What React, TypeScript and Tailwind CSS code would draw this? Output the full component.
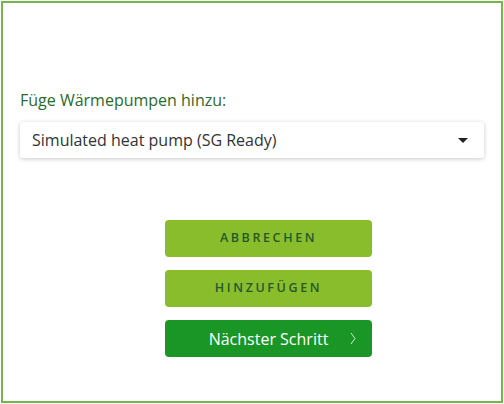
import React from 'react'

const font = { fontFamily: '"Open Sans", "Noto Sans", sans-serif' }

const AddHeatPump = () => {
    return (
        <div className="w-[504px] h-[404px] bg-white p-px" style={font}>
            <div className="flex h-full flex-col border-2 border-[#74b64a] px-[17px] pt-[87px]">
                <label htmlFor="heatpump" className="mb-[12px] text-[16px] leading-[20px] text-[#2c6a2e]">
                    Füge Wärmepumpen hinzu:
                </label>
                <div
                    id="heatpump"
                    className="flex h-[36px] items-center justify-between rounded-[3px] bg-white pl-[12px] pr-[16px] shadow-[0_1px_4px_rgba(0,0,0,0.22)]"
                >
                    <span className="text-[16px] text-[#333333]">Simulated heat pump (SG Ready)</span>
                    <svg width="10" height="5" viewBox="0 0 10 5">
                        <path d="M0 0h10L5 5z" fill="#222222" />
                    </svg>
                </div>
                <div className="mt-[62px] flex flex-col items-start gap-[13px] pl-[145px]">
                    <button className="h-[37px] w-[207px] rounded-[4px] bg-[#8abd2c] text-[12.5px] font-semibold tracking-[2.6px] text-[#24582a]">
                        ABBRECHEN
                    </button>
                    <button className="h-[37px] w-[207px] rounded-[4px] bg-[#8abd2c] text-[12.5px] font-semibold tracking-[2.6px] text-[#24582a]">
                        HINZUFÜGEN
                    </button>
                    <button className="relative h-[37px] w-[207px] rounded-[4px] bg-[#1a9626] text-[16px] text-white">
                        Nächster Schritt
                        <svg
                            className="absolute right-[16px] top-[12px]"
                            width="6"
                            height="13"
                            viewBox="0 0 6 13"
                        >
                            <path d="M1 1l4 5.5-4 5.5" fill="none" stroke="#cfe8cf" strokeWidth="1" />
                        </svg>
                    </button>
                </div>
            </div>
        </div>
    )
}

export default function App() {
    return <AddHeatPump />
}
